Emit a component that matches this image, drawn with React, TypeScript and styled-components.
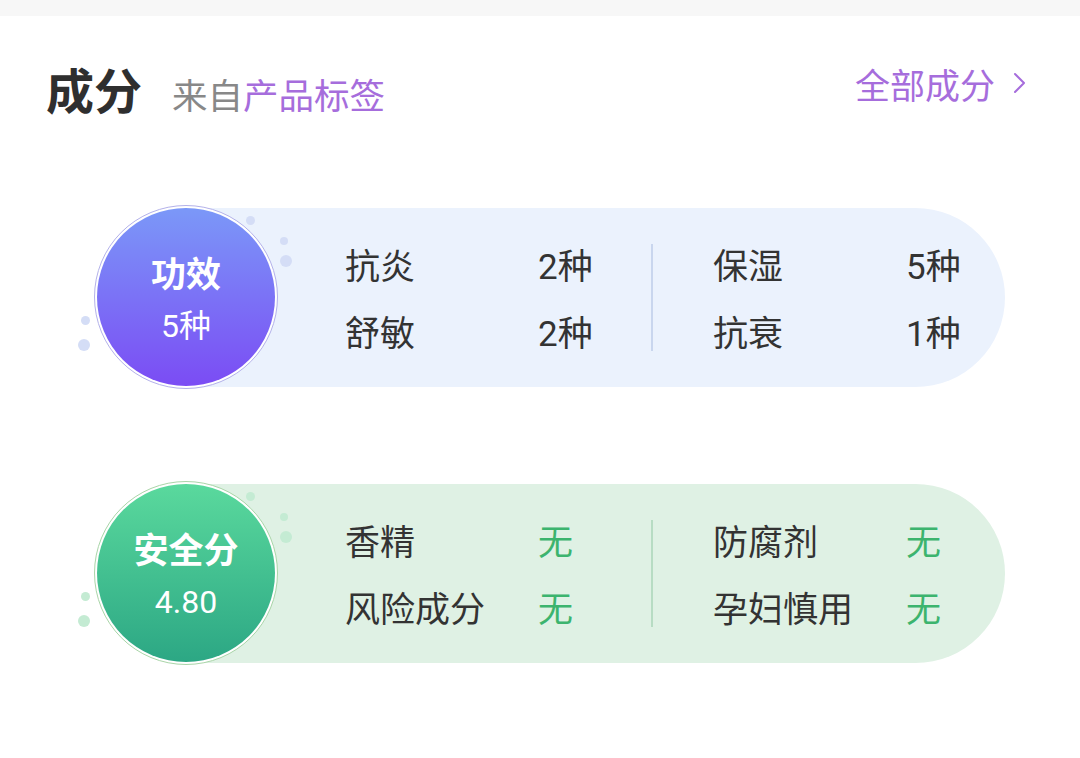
import styled, { createGlobalStyle } from 'styled-components';

const GlobalStyle = createGlobalStyle`
  body {
    margin: 0;
    background: #ffffff;
    font-family: Roboto, "Noto Sans CJK SC", sans-serif;
  }
`;

const Page = styled.div`
  width: 1080px;
  min-height: 758px;
  background: #ffffff;
`;

const TopBar = styled.div`
  height: 16px;
  background: #f7f7f7;
`;

const Header = styled.div`
  display: flex;
  justify-content: space-between;
  align-items: center;
  height: 80px;
  margin-top: 32px;
  padding: 0 53px 0 46px;
`;

const TitleGroup = styled.div`
  display: flex;
  align-items: baseline;
`;

const Title = styled.div`
  font-size: 48px;
  font-weight: 700;
  color: #2f2f2f;
`;

const Source = styled.div`
  margin-left: 30px;
  font-size: 35.5px;
  color: #888888;
`;

const Accent = styled.span`
  color: #a66ddc;
`;

const AllLink = styled.div`
  display: flex;
  align-items: center;
  gap: 18px;
  padding-bottom: 10px;
  font-size: 35px;
  color: #a66ddc;
`;

const Cards = styled.div`
  display: flex;
  flex-direction: column;
  gap: 92px;
  margin-top: 77px;
  padding-left: 94px;
`;

type Tone = 'blue' | 'green';

const palette = {
  blue: {
    ring: '#b3b1ea',
    from: '#7b98f8',
    to: '#7b4cf4',
    panel: '#ebf2fd',
    divider: '#c9d6ee',
    dot: '#d4ddf6',
  },
  green: {
    ring: '#a9d5a8',
    from: '#5ad99d',
    to: '#2ca784',
    panel: '#dff1e4',
    divider: '#b7dcc3',
    dot: '#c4ebd3',
  },
};

const Card = styled.div`
  position: relative;
  display: flex;
  align-items: center;
  width: 911px;
  height: 184px;
`;

const Circle = styled.div<{ $tone: Tone }>`
  position: relative;
  z-index: 2;
  flex-shrink: 0;
  box-sizing: border-box;
  width: 184px;
  height: 184px;
  padding: 2px;
  border-radius: 50%;
  border: 1.5px solid ${p => palette[p.$tone].ring};
  background: #ffffff;
`;

const CircleFill = styled.div<{ $tone: Tone }>`
  display: flex;
  flex-direction: column;
  align-items: center;
  justify-content: center;
  box-sizing: border-box;
  width: 100%;
  height: 100%;
  padding-top: 8px;
  border-radius: 50%;
  background: linear-gradient(
    180deg,
    ${p => palette[p.$tone].from} 0%,
    ${p => palette[p.$tone].to} 100%
  );
  color: #ffffff;
`;

const CircleTitle = styled.div`
  font-size: 35px;
  font-weight: 700;
  line-height: 48px;
`;

const CircleValue = styled.div`
  margin-top: 2px;
  font-size: 32px;
  line-height: 48px;
`;

const Panel = styled.div<{ $tone: Tone }>`
  display: flex;
  align-items: center;
  flex: 1;
  height: 179px;
  margin-left: -92px;
  padding-left: 159px;
  border-radius: 0 90px 90px 0;
  background: ${p => palette[p.$tone].panel};
`;

const Column = styled.div<{ $width?: number }>`
  display: grid;
  grid-template-columns: 193px auto;
  row-gap: 22px;
  width: ${p => (p.$width ? `${p.$width}px` : 'auto')};
  padding-top: 7px;
  font-size: 35px;
  line-height: 45px;
  color: #333333;
`;

const Value = styled.div<{ $good?: boolean }>`
  color: ${p => (p.$good ? '#3cb46e' : '#333333')};
`;

const Divider = styled.div<{ $tone: Tone }>`
  width: 2px;
  height: 107px;
  margin-right: 60px;
  background: ${p => palette[p.$tone].divider};
`;

const Dot = styled.div<{ $tone: Tone; $x: number; $y: number; $r: number }>`
  position: absolute;
  z-index: 1;
  left: ${p => p.$x - p.$r}px;
  top: ${p => p.$y - p.$r}px;
  width: ${p => p.$r * 2}px;
  height: ${p => p.$r * 2}px;
  border-radius: 50%;
  background: ${p => palette[p.$tone].dot};
`;

const dots = [
  { x: 156, y: 15, r: 4.5 },
  { x: 190, y: 36, r: 4 },
  { x: 192, y: 56, r: 6 },
  { x: -9, y: 115, r: 4.5 },
  { x: -10, y: 140, r: 6 },
];

type Item = { label: string; value: string; good?: boolean };

type CardData = {
  tone: Tone;
  title: string;
  value: string;
  left: Item[];
  right: Item[];
};

const cards: CardData[] = [
  {
    tone: 'blue',
    title: '功效',
    value: '5种',
    left: [
      { label: '抗炎', value: '2种' },
      { label: '舒敏', value: '2种' },
    ],
    right: [
      { label: '保湿', value: '5种' },
      { label: '抗衰', value: '1种' },
    ],
  },
  {
    tone: 'green',
    title: '安全分',
    value: '4.80',
    left: [
      { label: '香精', value: '无', good: true },
      { label: '风险成分', value: '无', good: true },
    ],
    right: [
      { label: '防腐剂', value: '无', good: true },
      { label: '孕妇慎用', value: '无', good: true },
    ],
  },
];

const Chevron = () => (
  <svg width="14" height="24" viewBox="0 0 14 24" fill="none">
    <polyline
      points="2,3 11,12 2,21"
      stroke="#a66ddc"
      strokeWidth="2"
      strokeLinecap="round"
      strokeLinejoin="round"
    />
  </svg>
);

const renderItems = (items: Item[]) =>
  items.map(item => [
    <div key={item.label + '-l'}>{item.label}</div>,
    <Value key={item.label + '-v'} $good={item.good}>
      {item.value}
    </Value>,
  ]);

const App = () => {
  return (
    <Page>
      <GlobalStyle />
      <TopBar />
      <Header>
        <TitleGroup>
          <Title>成分</Title>
          <Source>
            来自<Accent>产品标签</Accent>
          </Source>
        </TitleGroup>
        <AllLink>
          全部成分
          <Chevron />
        </AllLink>
      </Header>
      <Cards>
        {cards.map(card => (
          <Card key={card.title}>
            {dots.map((d, i) => (
              <Dot key={i} $tone={card.tone} $x={d.x} $y={d.y} $r={d.r} />
            ))}
            <Circle $tone={card.tone}>
              <CircleFill $tone={card.tone}>
                <CircleTitle>{card.title}</CircleTitle>
                <CircleValue>{card.value}</CircleValue>
              </CircleFill>
            </Circle>
            <Panel $tone={card.tone}>
              <Column $width={306}>{renderItems(card.left)}</Column>
              <Divider $tone={card.tone} />
              <Column>{renderItems(card.right)}</Column>
            </Panel>
          </Card>
        ))}
      </Cards>
    </Page>
  );
};

export default App;
